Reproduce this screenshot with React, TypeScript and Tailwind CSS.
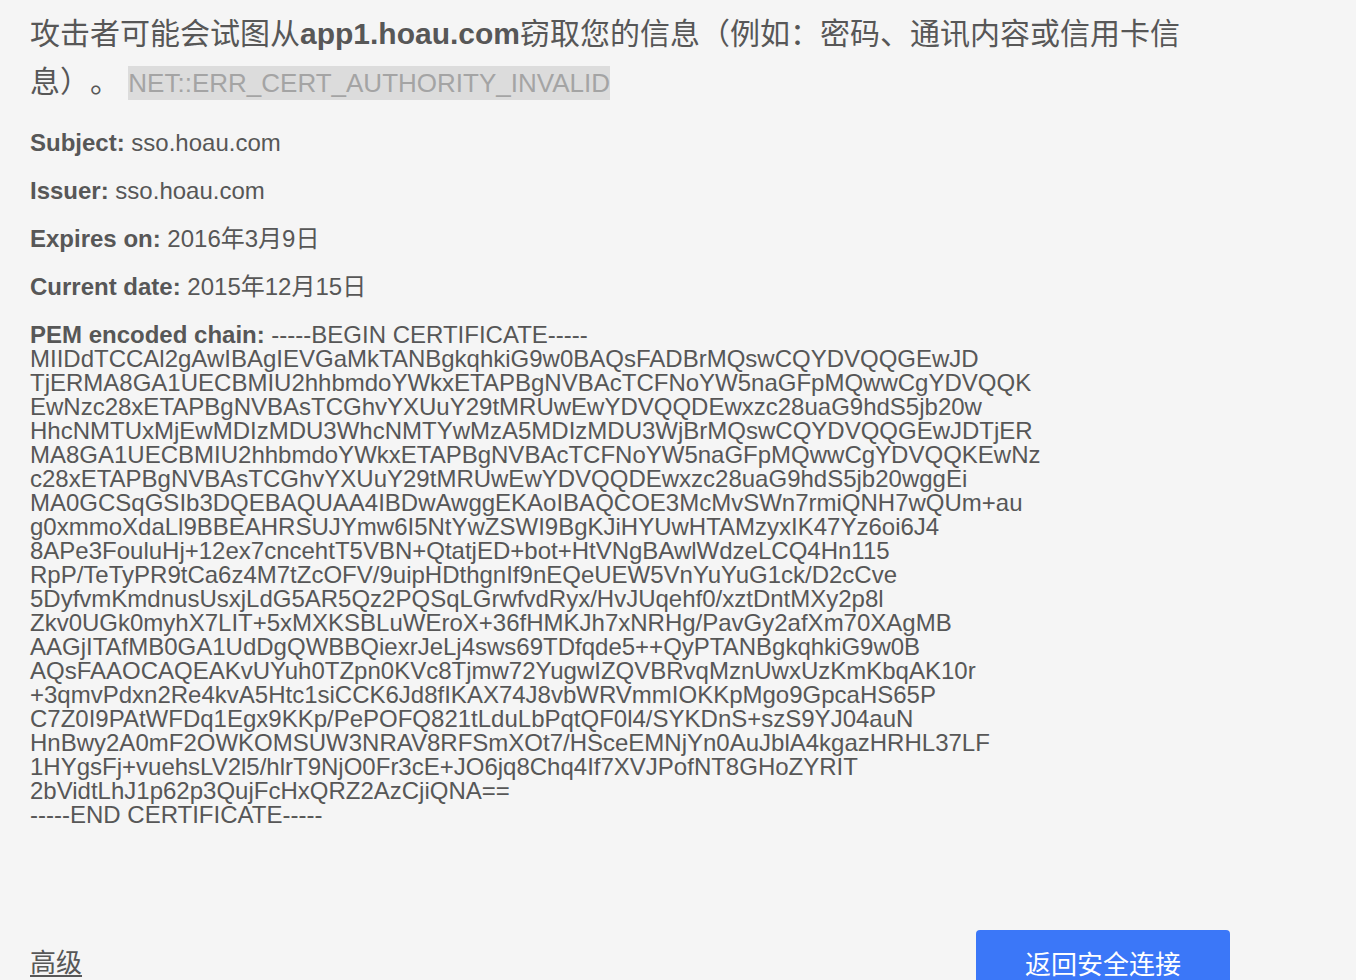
import React from "react";

const pem = [
  "MIIDdTCCAl2gAwIBAgIEVGaMkTANBgkqhkiG9w0BAQsFADBrMQswCQYDVQQGEwJD",
  "TjERMA8GA1UECBMIU2hhbmdoYWkxETAPBgNVBAcTCFNoYW5naGFpMQwwCgYDVQQK",
  "EwNzc28xETAPBgNVBAsTCGhvYXUuY29tMRUwEwYDVQQDEwxzc28uaG9hdS5jb20w",
  "HhcNMTUxMjEwMDIzMDU3WhcNMTYwMzA5MDIzMDU3WjBrMQswCQYDVQQGEwJDTjER",
  "MA8GA1UECBMIU2hhbmdoYWkxETAPBgNVBAcTCFNoYW5naGFpMQwwCgYDVQQKEwNz",
  "c28xETAPBgNVBAsTCGhvYXUuY29tMRUwEwYDVQQDEwxzc28uaG9hdS5jb20wggEi",
  "MA0GCSqGSIb3DQEBAQUAA4IBDwAwggEKAoIBAQCOE3McMvSWn7rmiQNH7wQUm+au",
  "g0xmmoXdaLl9BBEAHRSUJYmw6I5NtYwZSWI9BgKJiHYUwHTAMzyxIK47Yz6oi6J4",
  "8APe3FouluHj+12ex7cncehtT5VBN+QtatjED+bot+HtVNgBAwlWdzeLCQ4Hn115",
  "RpP/TeTyPR9tCa6z4M7tZcOFV/9uipHDthgnIf9nEQeUEW5VnYuYuG1ck/D2cCve",
  "5DyfvmKmdnusUsxjLdG5AR5Qz2PQSqLGrwfvdRyx/HvJUqehf0/xztDntMXy2p8l",
  "Zkv0UGk0myhX7LIT+5xMXKSBLuWEroX+36fHMKJh7xNRHg/PavGy2afXm70XAgMB",
  "AAGjITAfMB0GA1UdDgQWBBQiexrJeLj4sws69TDfqde5++QyPTANBgkqhkiG9w0B",
  "AQsFAAOCAQEAKvUYuh0TZpn0KVc8Tjmw72YugwIZQVBRvqMznUwxUzKmKbqAK10r",
  "+3qmvPdxn2Re4kvA5Htc1siCCK6Jd8fIKAX74J8vbWRVmmIOKKpMgo9GpcaHS65P",
  "C7Z0I9PAtWFDq1Egx9KKp/PePOFQ821tLduLbPqtQF0l4/SYKDnS+szS9YJ04auN",
  "HnBwy2A0mF2OWKOMSUW3NRAV8RFSmXOt7/HSceEMNjYn0AuJblA4kgazHRHL37LF",
  "1HYgsFj+vuehsLV2l5/hlrT9NjO0Fr3cE+JO6jq8Chq4If7XVJPofNT8GHoZYRIT",
  "2bVidtLhJ1p62p3QujFcHxQRZ2AzCjiQNA==",
];

export default function App() {
  return (
    <div className="h-[980px] overflow-hidden bg-[#f5f5f5] font-['Liberation_Sans','Noto_Sans_CJK_SC',sans-serif] text-[#575757] [text-spacing-trim:space-all]">
      <div className="ml-[30px] w-[1200px] pt-[10px]">
        <p className="text-[30px] leading-[48px]">
          攻击者可能会试图从<b className="font-bold">app1.hoau.com</b>窃取您的信息（例如：密码、通讯内容或信用卡信
          <br />
          息）。{" "}
          <span className="bg-[#dcdcdc] py-[2px] text-[26px] text-[#a4a4a4]">NET::ERR_CERT_AUTHORITY_INVALID</span>
        </p>

        <div className="mt-[24px] text-[24px] leading-[24px]">
          <p className="mb-[24px]">
            <b className="font-bold">Subject:</b> sso.hoau.com
          </p>
          <p className="mb-[24px]">
            <b className="font-bold">Issuer:</b> sso.hoau.com
          </p>
          <p className="mb-[24px]">
            <b className="font-bold">Expires on:</b> 2016年3月9日
          </p>
          <p className="mb-[24px]">
            <b className="font-bold">Current date:</b> 2015年12月15日
          </p>
          <div>
            <div>
              <b className="font-bold">PEM encoded chain:</b> -----BEGIN CERTIFICATE-----
            </div>
            {pem.map((l) => (
              <div key={l}>{l}</div>
            ))}
            <div>-----END CERTIFICATE-----</div>
          </div>
        </div>

        <div className="mt-[103px] flex items-start justify-between">
          <a className="mt-[18px] text-[26px] leading-[30px] text-[#575757] underline underline-offset-[3px]">
            高级
          </a>
          <button className="h-[70px] w-[254px] self-start rounded-[4px] bg-[#3b77f8] text-[26px] leading-[30px] text-white">
            返回安全连接
          </button>
        </div>
      </div>
    </div>
  );
}
